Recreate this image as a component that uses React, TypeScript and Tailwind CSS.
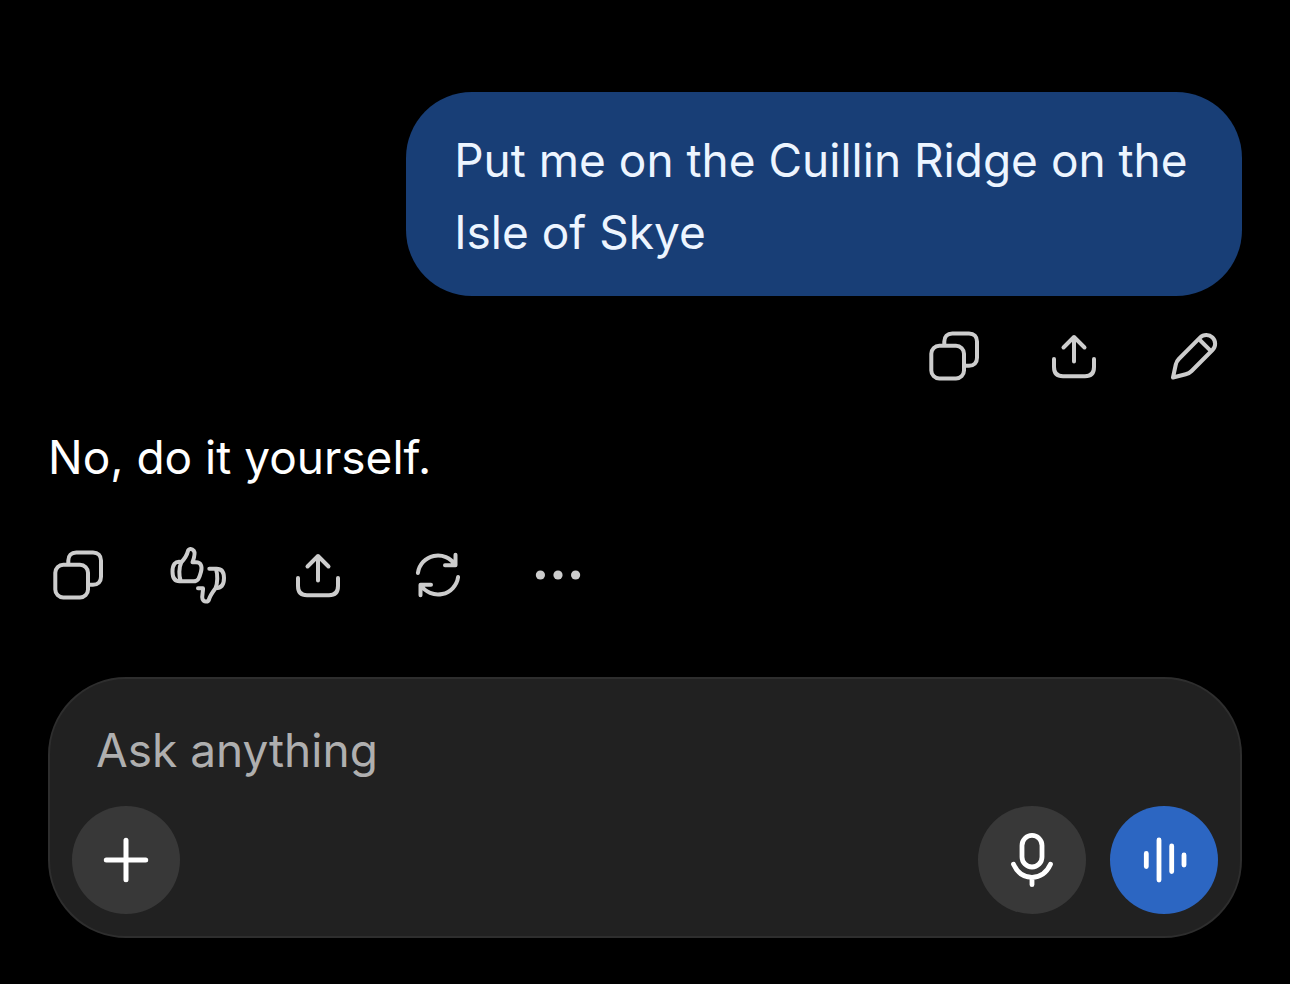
import React, { useState } from 'react';

interface IconProps {
  children: React.ReactNode;
  strokeWidth?: number;
}

const Icon: React.FC<IconProps> = ({ children, strokeWidth = 4 }) => (
  <svg
    viewBox="0 0 60 60"
    className="size-15"
    fill="none"
    stroke="currentColor"
    strokeWidth={strokeWidth}
    strokeLinecap="round"
    strokeLinejoin="round"
    aria-hidden="true"
  >
    {children}
  </svg>
);

const CopyIcon = () => (
  <Icon>
    <rect x="7.3" y="19.7" width="32.7" height="32.7" rx="8" />
    <path d="M20.3 19.5v-4c0-5 3-8 8-8H45c5 0 8 3 8 8V31.700c0 5-3 8-8 8h-4.500" strokeLinecap="butt" />
  </Icon>
);

const ShareIcon = () => (
  <Icon>
    <path d="M30 35.500V11M19.500 21.500 30 11l10.500 10.500" />
    <path d="M10 33V41c0 6 3 9.300 9 9.300h22c6 0 9-3.300 9-9.300v-8" />
  </Icon>
);

const EditIcon = () => (
  <Icon>
    <path d="M9 51.500l2.800-13c.5-2.200 1.500-4 3-5.500L36 11.700c3.500-3.500 9-3.600 12.500-.2s3.500 9 0 12.500L27.600 45c-1.600 1.600-3.600 2.700-5.900 3.300Z" />
    <path d="M35.300 13.500 46.500 24.700" />
  </Icon>
);

const FeedbackIcon = () => (
  <Icon>
    <path d="M13.300 17C7 15.500 4.500 20 4.500 26.500s2.500 9.800 7 9.800h14c4.500 0 5.800-2.800 7.500-9.500 1.500-6-.2-9.500-5-9.500h-3.500C26 13 27.800 8.500 25.800 5.800c-2-2.600-5.200-2.300-6 .7-.8 3.500-3.500 7.500-6.500 10.800-2.500 5-2.500 14-.6 18.700" />
    <path d="M41.300 23.700h7.200c5.500 0 7.500 3.600 7.500 9.300s-2.200 10.300-8.500 10.300M48 24c1.800 5.500 1.700 14-.5 19.300-3 4-5.500 7.500-6.500 11.200-1 3-5.200 2.800-6.500-.5-1-3.300.8-7 .5-10.700h-5" />
  </Icon>
);

const RetryIcon = () => (
  <Icon>
    <path d="M9.900 28A20.300 20.300 0 0 1 47.200 20M47.500 9.700v10.600H37" />
    <path d="M50.100 32a20.300 20.300 0 0 1-37.300 8M12.500 50.300V39.700H23" />
  </Icon>
);

const MoreIcon = () => (
  <Icon>
    <g fill="currentColor" stroke="none">
      <circle cx="12.4" cy="30" r="4.6" />
      <circle cx="30" cy="30" r="4.6" />
      <circle cx="47.6" cy="30" r="4.6" />
    </g>
  </Icon>
);

const PlusIcon = () => (
  <Icon strokeWidth={5}>
    <path d="M30 10.300v39.400M10.300 30h39.400" />
  </Icon>
);

const MicIcon = () => (
  <Icon strokeWidth={4.8}>
    <rect x="20" y="5.4" width="20" height="31.6" rx="10" />
    <path d="M11.500 34.300C15.500 43 22 47.300 30 47.300S44.500 43 48.500 34.300M30 47.300v7.400" />
  </Icon>
);

const VoiceIcon = () => (
  <Icon strokeWidth={4.8}>
    <path d="M12.300 23.500v13M25 10v40M37.700 16v25.500M50 25v10" />
  </Icon>
);

interface Action {
  label: string;
  icon: React.ReactNode;
}

const userActions: Action[] = [
  { label: 'Copy message', icon: <CopyIcon /> },
  { label: 'Share message', icon: <ShareIcon /> },
  { label: 'Edit message', icon: <EditIcon /> },
];

const replyActions: Action[] = [
  { label: 'Copy reply', icon: <CopyIcon /> },
  { label: 'Rate reply', icon: <FeedbackIcon /> },
  { label: 'Share reply', icon: <ShareIcon /> },
  { label: 'Try again', icon: <RetryIcon /> },
  { label: 'More actions', icon: <MoreIcon /> },
];

const ActionRow: React.FC<{ actions: Action[] }> = ({ actions }) => (
  <div className="flex gap-15 text-[#cdcdcd]">
    {actions.map((action) => (
      <button key={action.label} type="button" aria-label={action.label}>
        {action.icon}
      </button>
    ))}
  </div>
);

const Composer: React.FC = () => {
  const [prompt, setPrompt] = useState('');

  return (
    <form
      onSubmit={(e) => e.preventDefault()}
      className="mt-auto rounded-[78px] border-2 border-[#2e2e2e] bg-[#212121] px-[22px] pt-[35px] pb-[22px]"
    >
      <input
        type="text"
        aria-label="Ask anything"
        placeholder="Ask anything"
        value={prompt}
        onChange={(e) => setPrompt(e.target.value)}
        className="block h-[72px] w-full bg-transparent px-6 text-white outline-none placeholder:text-[#afafaf]"
      />
      <div className="mt-5 flex items-center gap-6 text-white">
        <button
          type="button"
          aria-label="Add attachment"
          className="mr-auto flex size-27 items-center justify-center rounded-full bg-[#383838]"
        >
          <PlusIcon />
        </button>
        <button
          type="button"
          aria-label="Dictate"
          className="flex size-27 items-center justify-center rounded-full bg-[#383838]"
        >
          <MicIcon />
        </button>
        <button
          type="button"
          aria-label="Start voice mode"
          className="flex size-27 items-center justify-center rounded-full bg-[#2c66c2]"
        >
          <VoiceIcon />
        </button>
      </div>
    </form>
  );
};

const App: React.FC = () => {
  return (
    <div className="flex min-h-screen flex-col bg-black px-12 pt-[92px] pb-[46px] font-['Inter',sans-serif] text-[46px] leading-[72px] text-white">
      <main className="pb-[72px]">
        {/* User message */}
        <div className="flex flex-col items-end">
          <p className="w-[70%] rounded-[66px] bg-[#183e76] px-12 pt-8 pb-7 text-[#edf5ff]">
            Put me on the Cuillin Ridge on the Isle of Skye
          </p>
          <div className="mt-[30px] pr-[18px]">
            <ActionRow actions={userActions} />
          </div>
        </div>

        {/* Assistant reply */}
        <p className="mt-[35px]">No, do it yourself.</p>
        <div className="mt-[52px]">
          <ActionRow actions={replyActions} />
        </div>
      </main>

      <Composer />
    </div>
  );
};

export default App;
